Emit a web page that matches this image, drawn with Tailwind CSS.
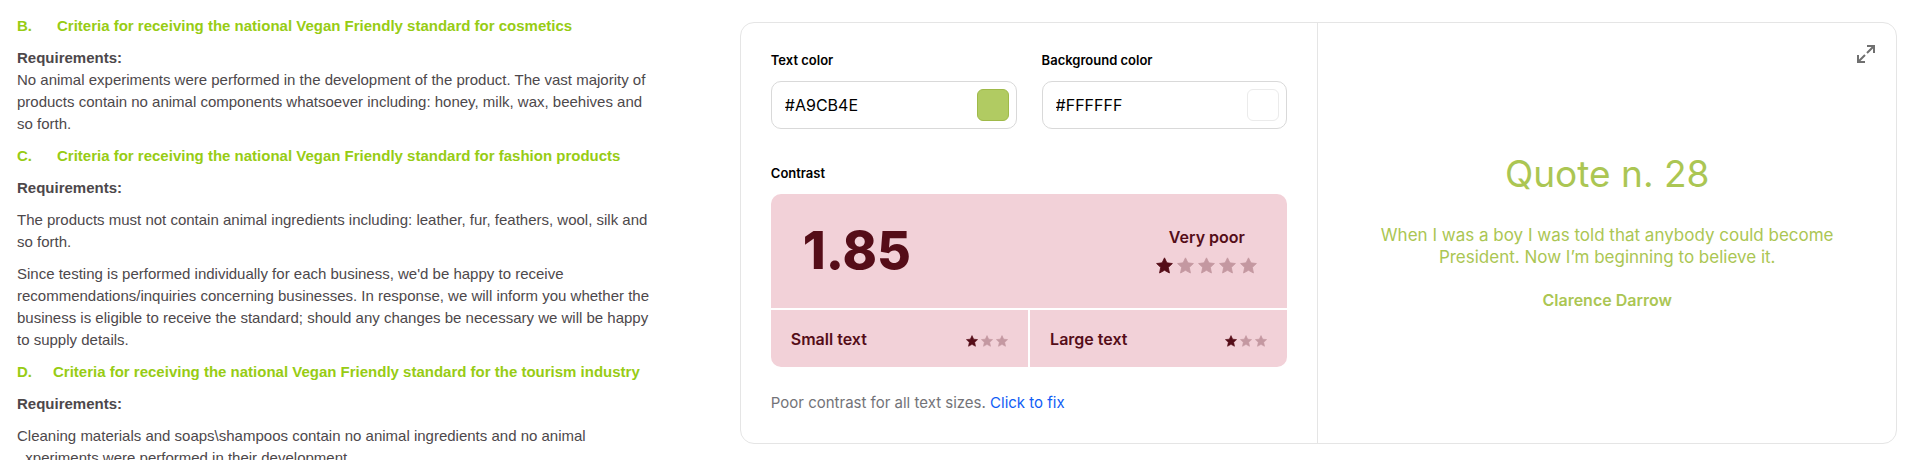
<!DOCTYPE html>
<html lang="en">
<head>
  <meta charset="UTF-8" />
  <meta name="viewport" content="width=device-width, initial-scale=1" />
  <title>Color contrast checker</title>
  <script src="https://cdn.jsdelivr.net/npm/@tailwindcss/browser@4"></script>
</head>
<body class="bg-white h-screen overflow-hidden flex items-start font-['Inter',sans-serif]">

  <!-- Icons -->
  <svg class="hidden">
    <symbol id="star" viewBox="0 0 20 20">
      <path fill="currentColor" stroke="currentColor" stroke-width="1" stroke-linejoin="round" d="M10 1l2.800 5.900 6.500.8-4.800 4.500 1.300 6.600L10 15.600l-5.800 3.200 1.300-6.600L.7 7.700l6.500-.8z" />
    </symbol>
  </svg>

  <!-- Criteria text -->
  <article class="relative w-[34%] h-full shrink-0 overflow-hidden pt-[15px] pl-[17px] space-y-[10px] font-['Liberation_Sans',Arial,sans-serif] text-[15px] leading-[22px] text-[#4d484b] whitespace-nowrap">
    <h2 class="flex font-bold text-[#97cc14]"><span class="w-10">B.</span>Criteria for receiving the national Vegan Friendly standard for cosmetics</h2>
    <div>
      <h3 class="font-bold">Requirements:</h3>
      <p>No animal experiments were performed in the development of the product. The vast majority of<br>products contain no animal components whatsoever including: honey, milk, wax, beehives and<br>so forth.</p>
    </div>
    <h2 class="flex font-bold text-[#97cc14]"><span class="w-10">C.</span>Criteria for receiving the national Vegan Friendly standard for fashion products</h2>
    <h3 class="font-bold">Requirements:</h3>
    <p>The products must not contain animal ingredients including: leather, fur, feathers, wool, silk and<br>so forth.</p>
    <p>Since testing is performed individually for each business, we'd be happy to receive<br>recommendations/inquiries concerning businesses. In response, we will inform you whether the<br>business is eligible to receive the standard; should any changes be necessary we will be happy<br>to supply details.</p>
    <h2 class="flex font-bold text-[#97cc14]"><span class="w-9">D.</span>Criteria for receiving the national Vegan Friendly standard for the tourism industry</h2>
    <h3 class="font-bold">Requirements:</h3>
    <p>Cleaning materials and soaps\shampoos contain no animal ingredients and no animal<br>experiments were performed in their development.</p>
    <span class="absolute left-0 bottom-0 w-[26px] h-2 bg-white rounded-tr-lg"></span>
  </article>

  <!-- Contrast checker -->
  <main class="flex-1 grid grid-cols-2 mt-[22px] ml-[87px] mr-[23px] border border-[#e5e5e5] rounded-[14px]">
    <section class="border-r border-[#e5e5e5] px-[30px] pt-[27px] pb-[30px]">
      <div class="grid grid-cols-2 gap-[25px]">
        <div>
          <label for="textColor" class="block text-[13px] leading-5 font-semibold text-black">Text color</label>
          <div class="mt-[11px] h-12 flex items-center border border-[#d9d9d9] rounded-[10px] pl-[13px] pr-[7px]">
            <input id="textColor" type="text" value="#A9CB4E" class="flex-1 min-w-0 text-base text-black outline-none">
            <button aria-label="Pick text color" class="size-8 rounded-md bg-[#b1cb62] border border-[#9fba49]"></button>
          </div>
        </div>
        <div>
          <label for="bgColor" class="block text-[13px] leading-5 font-semibold text-black">Background color</label>
          <div class="mt-[11px] h-12 flex items-center border border-[#d9d9d9] rounded-[10px] pl-[13px] pr-[7px]">
            <input id="bgColor" type="text" value="#FFFFFF" class="flex-1 min-w-0 text-base text-black outline-none">
            <button aria-label="Pick background color" class="size-8 rounded-md bg-white border border-[#ebebeb]"></button>
          </div>
        </div>
      </div>

      <h2 class="mt-[34px] text-[13px] leading-5 font-semibold text-black">Contrast</h2>
      <div class="mt-[11px] rounded-[10px] overflow-hidden grid grid-cols-2 gap-[2px] text-[#550d18]">
        <div class="col-span-2 h-[114px] bg-[#f2d1d8] flex items-center justify-between pl-8 pr-[30px]">
          <strong class="text-[52px] leading-none font-extrabold">1.85</strong>
          <div class="flex flex-col items-center gap-2 pb-1">
            <span class="text-base leading-6 font-semibold">Very poor</span>
            <div class="flex gap-1">
              <svg class="size-[17px]"><use href="#star" /></svg>
              <svg class="size-[17px] text-[#c498a1]"><use href="#star" /></svg>
              <svg class="size-[17px] text-[#c498a1]"><use href="#star" /></svg>
              <svg class="size-[17px] text-[#c498a1]"><use href="#star" /></svg>
              <svg class="size-[17px] text-[#c498a1]"><use href="#star" /></svg>
            </div>
          </div>
        </div>
        <div class="h-[57px] bg-[#f2d1d8] flex items-center justify-between px-5">
          <span class="text-base font-semibold">Small text</span>
          <div class="flex gap-[3px] pt-1">
            <svg class="size-3"><use href="#star" /></svg>
            <svg class="size-3 text-[#c498a1]"><use href="#star" /></svg>
            <svg class="size-3 text-[#c498a1]"><use href="#star" /></svg>
          </div>
        </div>
        <div class="h-[57px] bg-[#f2d1d8] flex items-center justify-between px-5">
          <span class="text-base font-semibold">Large text</span>
          <div class="flex gap-[3px] pt-1">
            <svg class="size-3"><use href="#star" /></svg>
            <svg class="size-3 text-[#c498a1]"><use href="#star" /></svg>
            <svg class="size-3 text-[#c498a1]"><use href="#star" /></svg>
          </div>
        </div>
      </div>
      <p class="mt-[26px] text-[15px] leading-5 text-[#737378]">Poor contrast for all text sizes. <a href="#" class="text-[#0f5df5]">Click to fix</a></p>
    </section>

    <!-- Preview -->
    <section class="relative flex flex-col items-center justify-center pb-1 text-center text-[#abc653]">
      <button aria-label="Full screen" class="absolute top-[21px] right-5 text-[#707070]">
        <svg class="size-5" viewBox="0 0 20 20" fill="none" stroke="currentColor" stroke-width="2">
          <path d="M11 2h7v7M18 2l-7 7M9 18H2v-7M2 18l7-7" />
        </svg>
      </button>
      <h1 class="text-[37px] leading-[48px]">Quote n. 28</h1>
      <p class="mt-[26px] text-[17px] leading-[22px]">When I was a boy I was told that anybody could become<br>President. Now I’m beginning to believe it.</p>
      <p class="mt-5 text-base leading-6 font-semibold">Clarence Darrow</p>
    </section>
  </main>

</body>
</html>
